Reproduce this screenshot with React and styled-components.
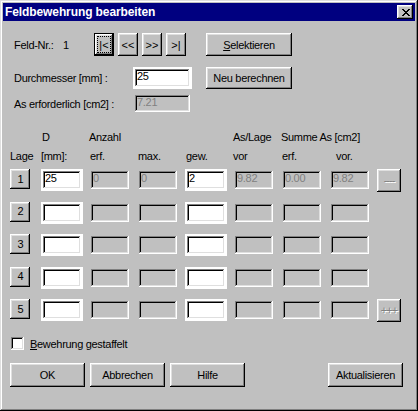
import styled, { createGlobalStyle } from 'styled-components';

const GlobalStyle = createGlobalStyle`
  html, body {
    margin: 0;
    padding: 0;
    background: #c0c0c0;
  }
  body {
    font-family: "Liberation Sans", Arial, sans-serif;
    font-size: 11px;
    letter-spacing: -0.3px;
    color: #000;
  }
`;

const rows = [
  { d: '25', erf: '0', max: '0', gew: '2', vor: '9.82', serf: '0.00', svor: '9.82', side: '----' },
  {},
  {},
  {},
  { side: '+++' },
];

const App = () => {
  return (
    <>
      <GlobalStyle />
      <Window>
        <TitleBar>
          <Title>Feldbewehrung bearbeiten</Title>
          <CloseButton>
            <svg width="8" height="7" viewBox="0 0 8 7" shapeRendering="crispEdges">
              <path
                d="M0 0h2v1H0zM6 0h2v1H6zM1 1h2v1H1zM5 1h2v1H5zM2 2h4v1H2zM3 3h2v1H3zM2 4h4v1H2zM1 5h2v1H1zM5 5h2v1H5zM0 6h2v1H0zM6 6h2v1H6z"
                fill="#000"
              />
            </svg>
          </CloseButton>
        </TitleBar>

        <Body>
          <Line $h={23} $mt={12}>
            <Label $w={49}>Feld-Nr.:</Label>
            <Value>1</Value>
            <NavGroup>
              <NavButton $default>|&lt;</NavButton>
              <NavButton>&lt;&lt;</NavButton>
              <NavButton>&gt;&gt;</NavButton>
              <NavButton>&gt;|</NavButton>
            </NavGroup>
            <Button $w={86} $h={23} $ml={20}>
              <u>S</u>elektieren
            </Button>
          </Line>

          <Line $h={22} $mt={11}>
            <Label $w={119}>Durchmesser [mm] :</Label>
            <Field $w={59} defaultValue="25" />
            <Button $w={86} $h={22} $ml={14}>Neu berechnen</Button>
          </Line>

          <Line $h={21} $mt={4}>
            <Label $w={119}>As erforderlich [cm2] :</Label>
            <Field $w={59} $h={21} defaultValue="7.21" disabled />
          </Line>

          <GridRow $mt={17}>
            <span />
            <Head $pl={1}>D</Head>
            <Head>Anzahl</Head>
            <span />
            <span />
            <Head>As/Lage</Head>
            <Head $span={3}>Summe As [cm2]</Head>
          </GridRow>
          <GridRow $mt={6}>
            <Head>Lage</Head>
            <Head>[mm]:</Head>
            <Head $pl={1}>erf.</Head>
            <Head $pl={1}>max.</Head>
            <Head $pl={1}>gew.</Head>
            <Head>vor</Head>
            <Head $pl={1}>erf.</Head>
            <Head $pl={7}>vor.</Head>
          </GridRow>

          {rows.map((r, i) => (
            <DataRow key={i} $mt={i === 0 ? 6 : 10.5}>
              <RowButton>{i + 1}</RowButton>
              <Field $w={42} defaultValue={r.d || ''} />
              <Field $w={42} defaultValue={r.erf || ''} disabled />
              <Field $w={42} defaultValue={r.max || ''} disabled />
              <Field $w={42} defaultValue={r.gew || ''} />
              <Field $w={42} defaultValue={r.vor || ''} disabled />
              <Field $w={42} defaultValue={r.serf || ''} disabled />
              <Field $w={42} defaultValue={r.svor || ''} disabled />
              {r.side ? <SideButton disabled>{r.side}</SideButton> : <span />}
            </DataRow>
          ))}

          <CheckLine>
            <CheckBox />
            <span>
              <u>B</u>ewehrung gestaffelt
            </span>
          </CheckLine>

          <Footer>
            <Button $w={75} $h={24}>OK</Button>
            <Button $w={75} $h={24}>Abbrechen</Button>
            <Button $w={75} $h={24}>Hilfe</Button>
            <Button $w={75} $h={24} $ml="auto">Aktualisieren</Button>
          </Footer>
        </Body>
      </Window>
    </>
  );
};

export default App;

const raised = `
  box-shadow: inset -1px -1px #000, inset 1px 1px #fff,
    inset -2px -2px #808080, inset 2px 2px #dfdfdf;
`;

const sunken = `
  box-shadow: inset -1px -1px #fff, inset 1px 1px #808080,
    inset -2px -2px #dfdfdf, inset 2px 2px #000;
`;

const Window = styled.div`
  width: 418px;
  height: 411px;
  box-sizing: border-box;
  padding: 3px;
  background: #c0c0c0;
  box-shadow: inset -1px -1px #000, inset 1px 1px #dfdfdf,
    inset -2px -2px #808080, inset 2px 2px #fff;
  display: flex;
  flex-direction: column;
`;

const TitleBar = styled.div`
  height: 18px;
  background: #000080;
  display: flex;
  align-items: center;
  justify-content: space-between;
  padding: 0 2px;
`;

const Title = styled.div`
  color: #fff;
  font-weight: bold;
  font-size: 12px;
  letter-spacing: -0.1px;
`;

const CloseButton = styled.div`
  width: 16px;
  height: 14px;
  background: #c0c0c0;
  ${raised}
  display: flex;
  align-items: center;
  justify-content: center;
  padding-left: 1px;
  box-sizing: border-box;
`;

const Body = styled.div`
  display: flex;
  flex-direction: column;
  padding: 0 12px 0 7px;
`;

const Line = styled.div`
  display: flex;
  align-items: center;
  height: ${p => p.$h}px;
  margin-top: ${p => p.$mt}px;
`;

const Label = styled.span`
  margin-left: 4px;
  width: ${p => p.$w}px;
  flex-shrink: 0;
  white-space: nowrap;
`;

const Value = styled.span`
  width: 31px;
`;

const NavGroup = styled.div`
  display: flex;
  gap: 4px;
`;

const Button = styled.button`
  font: inherit;
  letter-spacing: inherit;
  color: #000;
  background: #c0c0c0;
  border: none;
  padding: 0;
  margin: 0 0 0 ${p => (p.$ml === 'auto' ? 'auto' : `${p.$ml || 0}px`)};
  width: ${p => p.$w}px;
  height: ${p => p.$h}px;
  ${raised}
  flex-shrink: 0;
`;

const NavButton = styled.button`
  position: relative;
  font: inherit;
  letter-spacing: 0;
  color: #000;
  background: #c0c0c0;
  padding: 0;
  width: 20px;
  height: 23px;
  box-sizing: border-box;
  border: ${p => (p.$default ? '1px solid #000' : 'none')};
  ${raised}

  &::after {
    content: '';
    display: ${p => (p.$default ? 'block' : 'none')};
    position: absolute;
    inset: 3px;
    outline: 1px dotted #000;
  }
`;

const Field = styled.input`
  width: ${p => p.$w}px;
  height: ${p => p.$h || 22}px;
  box-sizing: border-box;
  border: 2px solid transparent;
  ${sunken}
  background: #fff;
  font: inherit;
  letter-spacing: inherit;
  line-height: 12px;
  color: #000;
  padding: 0 1px ${p => (p.$h ? 3 : 4)}px 2px;
  margin: 0;
  outline: none;

  &:disabled {
    background: #c0c0c0;
    color: #808080;
    -webkit-text-fill-color: #808080;
  }
`;

const GridRow = styled.div`
  display: grid;
  grid-template-columns: 31px repeat(7, 48px) 24px;
  margin-top: ${p => p.$mt}px;
  line-height: 13px;
`;

const Head = styled.span`
  padding-left: ${p => p.$pl || 0}px;
  white-space: nowrap;
  grid-column: span ${p => p.$span || 1};
`;

const DataRow = styled(GridRow)`
  height: 22px;
  align-items: start;
`;

const RowButton = styled.button`
  font: inherit;
  letter-spacing: 0;
  color: #000;
  background: #c0c0c0;
  border: none;
  padding: 0 0 0 1px;
  width: 20px;
  height: 20px;
  ${raised}
`;

const SideButton = styled.button`
  font: inherit;
  letter-spacing: -1px;
  color: #808080;
  text-shadow: 1px 1px #fff;
  background: #c0c0c0;
  border: none;
  padding: 0;
  width: 24px;
  height: 23px;
  ${raised}
`;

const CheckLine = styled.label`
  display: flex;
  align-items: center;
  gap: 6px;
  height: 13px;
  margin: 16px 0 0 1px;
`;

const CheckBox = styled.span`
  width: 13px;
  height: 13px;
  background: #fff;
  ${sunken}
`;

const Footer = styled.div`
  display: flex;
  gap: 5px;
  margin-top: 13px;
`;
